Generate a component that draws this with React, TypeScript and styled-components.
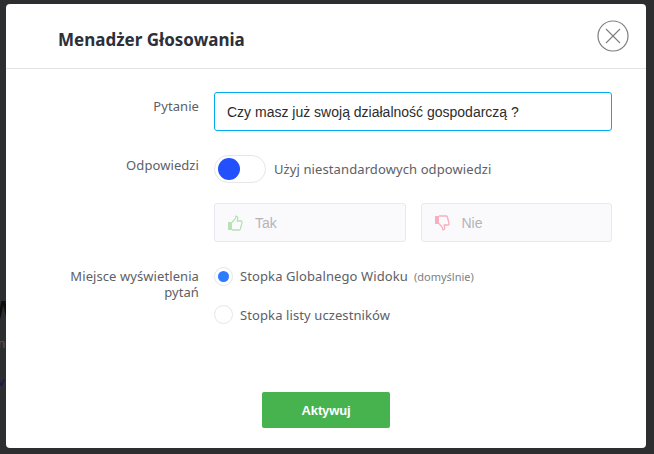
import React from 'react'
import styled, { createGlobalStyle } from 'styled-components'

const GlobalStyle = createGlobalStyle`
  html, body {
    margin: 0;
    padding: 0;
    width: 654px;
    height: 454px;
    overflow: hidden;
    background: #2d2e30;
    font-family: "Noto Sans", "Open Sans", sans-serif;
  }
  * { box-sizing: border-box; }
`

const Backdrop = styled.div`
  width: 654px;
  height: 454px;
  padding: 4px 8px 6px 6px;
  position: relative;
  overflow: hidden;
`

const PageBehind = styled.div`
  position: absolute;
  left: -8px;
  top: 296px;
  display: flex;
  flex-direction: column;
  font-family: "Liberation Sans", sans-serif;
`

const BehindTitle = styled.div`
  font-size: 24px;
  font-weight: 700;
  line-height: 28px;
  color: #0c0d0e;
`

const BehindText = styled.div`
  font-size: 13px;
  line-height: 16px;
  margin-top: 12px;
  padding-left: 6px;
  color: #55565a;
`

const BehindLink = styled.div`
  font-size: 13px;
  line-height: 16px;
  margin-top: 22px;
  padding-left: 6px;
  color: #14145a;
`

const Modal = styled.div`
  position: relative;
  width: 640px;
  height: 444px;
  background: #fff;
  border-radius: 4px;
  display: flex;
  flex-direction: column;
`

const Header = styled.div`
  height: 65px;
  flex: none;
  border-bottom: 1px solid #e3e3e3;
  display: flex;
  align-items: center;
  justify-content: space-between;
  padding: 7px 17px 0 52px;
`

const Title = styled.h2`
  margin: 0;
  font-size: 17px;
  font-weight: 700;
  color: #2b303b;
`

const CloseButton = styled.button`
  width: 32px;
  height: 32px;
  padding: 0;
  margin-top: -7px;
  border: none;
  background: none;
  display: block;
`

const Body = styled.div`
  flex: 1;
  display: flex;
  flex-direction: column;
  padding: 23px 34px 0 0;
`

const Row = styled.div<{ $mt?: number }>`
  display: grid;
  grid-template-columns: 193px 1fr;
  column-gap: 15px;
  margin-top: ${p => p.$mt || 0}px;
`

const Label = styled.div<{ $pt?: number }>`
  font-size: 13px;
  line-height: 16px;
  letter-spacing: 0.08px;
  color: #5d6066;
  text-align: right;
  padding-left: 60px;
  padding-top: ${p => p.$pt || 0}px;
`

const TextInput = styled.input`
  width: 398px;
  height: 39px;
  border: 1px solid #00aeef;
  border-radius: 3px;
  padding: 0 12px;
  font-family: "Liberation Sans", sans-serif;
  font-size: 14px;
  color: #2c2c2c;
  background: #fff;
  outline: none;
`

const ToggleRow = styled.div`
  display: flex;
  align-items: center;
  gap: 8px;
`

const Track = styled.div`
  width: 52px;
  height: 28px;
  border: 1px solid #e6e6e6;
  border-radius: 14px;
  background: #fff;
  padding: 2px 3px;
`

const Knob = styled.div`
  width: 22px;
  height: 22px;
  border-radius: 50%;
  background: #2250fc;
`

const OptionText = styled.span`
  font-size: 13px;
  line-height: 16px;
  letter-spacing: 0.1px;
  color: #5d6066;
`

const Answers = styled.div`
  display: flex;
  gap: 15px;
  width: 398px;
`

const Answer = styled.div`
  flex: 1;
  height: 39px;
  background: #fafafd;
  border: 1px solid #e8e8f2;
  border-radius: 3px;
  display: flex;
  align-items: center;
  gap: 12px;
  padding-left: 12px;
  font-family: "Liberation Sans", sans-serif;
  font-size: 14px;
  color: #b4b4b6;
`

const RadioList = styled.div`
  display: flex;
  flex-direction: column;
  gap: 19px;
  margin-top: -1px;
`

const RadioRow = styled.div`
  display: flex;
  align-items: center;
  gap: 7px;
`

const RadioCircle = styled.div`
  width: 19px;
  height: 19px;
  border: 1px solid #e6e6e6;
  border-radius: 50%;
  display: flex;
  align-items: center;
  justify-content: center;
  background: #fff;
`

const RadioDot = styled.div`
  width: 11px;
  height: 11px;
  border-radius: 50%;
  background: #2b7cff;
`

const Hint = styled.span`
  font-size: 11px;
  letter-spacing: 0;
  color: #7c7f85;
  margin-left: 6px;
`

const Footer = styled.div`
  display: flex;
  justify-content: center;
  padding: 0 0 20px 0;
`

const ActivateButton = styled.button`
  width: 128px;
  height: 36px;
  border: none;
  border-radius: 2px;
  background: #47b34f;
  color: #fff;
  font-family: "Liberation Sans", sans-serif;
  font-size: 13px;
  font-weight: 700;
  letter-spacing: -0.15px;
`

const ThumbUp = () => (
  <svg width="16" height="16" viewBox="0 0 16 16" fill="none">
    <rect x="1" y="7" width="4" height="8" rx="0.5" fill="#b7e2b4" />
    <path
      d="M5 7.5 L8.2 3.6 C8.6 3 8.7 2.2 8.8 1.2 C10.4 1 11 2.6 10.6 4.2 L10.2 6 L14 6 C15 6 15.2 7 14.9 7.8 L13.4 14 C13.2 14.6 12.8 15 12.2 15 L5 15"
      stroke="#b7e2b4"
      strokeWidth="1.3"
      strokeLinejoin="round"
    />
  </svg>
)

const ThumbDown = () => (
  <svg width="16" height="16" viewBox="0 0 16 16" fill="none">
    <rect x="1" y="1" width="4" height="8" rx="0.5" fill="#f8aebb" />
    <path
      d="M5 8.5 L8.2 12.4 C8.6 13 8.7 13.8 8.8 14.8 C10.4 15 11 13.4 10.6 11.8 L10.2 10 L14 10 C15 10 15.2 9 14.9 8.2 L13.4 2 C13.2 1.4 12.8 1 12.2 1 L5 1"
      stroke="#f8aebb"
      strokeWidth="1.3"
      strokeLinejoin="round"
    />
  </svg>
)

const App: React.FunctionComponent = () => {
  return (
    <Backdrop>
      <GlobalStyle />
      <PageBehind>
        <BehindTitle>W</BehindTitle>
        <BehindText>ni</BehindText>
        <BehindLink>v</BehindLink>
      </PageBehind>
      <Modal>
        <Header>
          <Title>Menadżer Głosowania</Title>
          <CloseButton aria-label="close">
            <svg width="32" height="32" viewBox="0 0 32 32" fill="none" stroke="#7d7d7d">
              <circle cx="16" cy="16" r="15" strokeWidth="1.2" />
              <path d="M9 9 L23 23 M23 9 L9 23" strokeWidth="1.1" />
            </svg>
          </CloseButton>
        </Header>
        <Body>
          <Row>
            <Label $pt={6}>Pytanie</Label>
            <TextInput readOnly value="Czy masz już swoją działalność gospodarczą ?" />
          </Row>
          <Row $mt={24}>
            <Label $pt={2}>Odpowiedzi</Label>
            <ToggleRow>
              <Track>
                <Knob />
              </Track>
              <OptionText>Użyj niestandardowych odpowiedzi</OptionText>
            </ToggleRow>
          </Row>
          <Row $mt={20}>
            <div />
            <Answers>
              <Answer>
                <ThumbUp />
                Tak
              </Answer>
              <Answer>
                <ThumbDown />
                Nie
              </Answer>
            </Answers>
          </Row>
          <Row $mt={26}>
            <Label>Miejsce wyświetlenia pytań</Label>
            <RadioList>
              <RadioRow>
                <RadioCircle>
                  <RadioDot />
                </RadioCircle>
                <OptionText>
                  Stopka Globalnego Widoku
                  <Hint>(domyślnie)</Hint>
                </OptionText>
              </RadioRow>
              <RadioRow>
                <RadioCircle />
                <OptionText>Stopka listy uczestników</OptionText>
              </RadioRow>
            </RadioList>
          </Row>
        </Body>
        <Footer>
          <ActivateButton>Aktywuj</ActivateButton>
        </Footer>
      </Modal>
    </Backdrop>
  )
}

export default App
